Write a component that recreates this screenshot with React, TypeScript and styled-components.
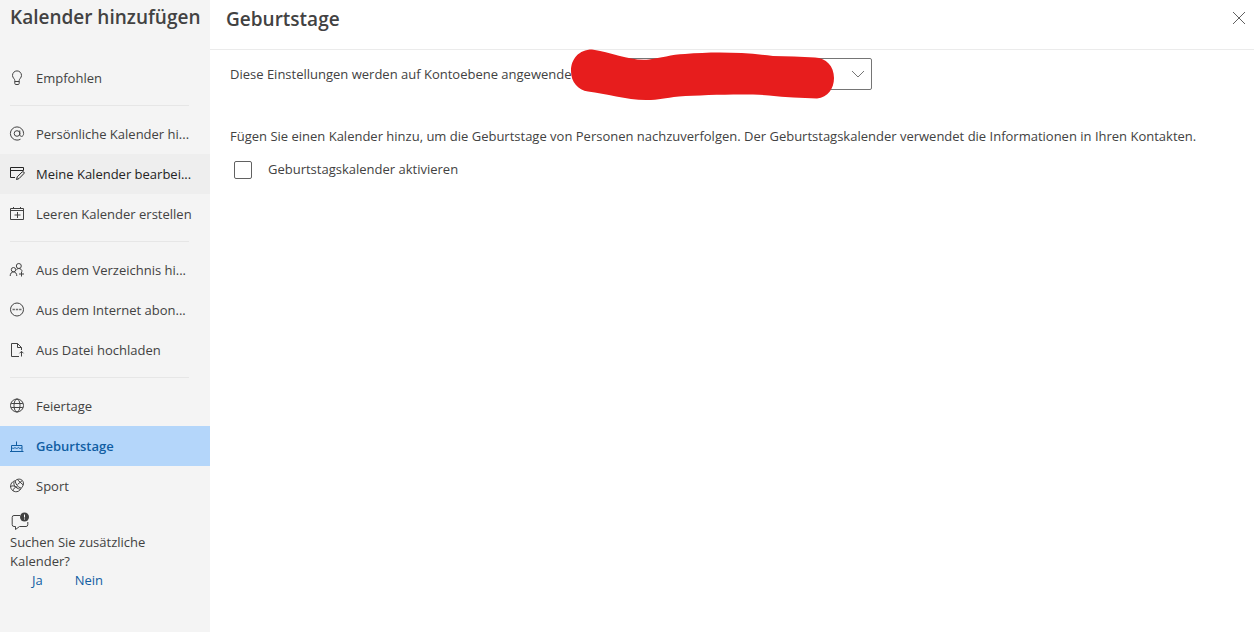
import React from "react";
import styled, { createGlobalStyle } from "styled-components";

const GlobalStyle = createGlobalStyle`
  * { box-sizing: border-box; }
  body {
    margin: 0;
    background: #ffffff;
    color: #424242;
    font-family: "Segoe UI", "Open Sans", "Noto Sans", sans-serif;
    font-size: 13px;
    line-height: 19px;
  }
  button, select, input { font: inherit; color: inherit; }
`;

const Layout = styled.div`
  display: flex;
  min-height: 100vh;
`;

const Sidebar = styled.aside`
  flex: none;
  width: 210px;
  background: #f4f4f4;
`;

const SidebarTitle = styled.h1`
  margin: 0;
  height: 58px;
  padding: 4px 0 0 10px;
  font-size: 19px;
  line-height: 26px;
  font-weight: 600;
  white-space: nowrap;
`;

const Separator = styled.hr`
  margin: 7px 21px 8px 10px;
  border: 0;
  height: 1px;
  background: #e6e6e6;
`;

const NavButton = styled.button<{ $state?: "hover" | "selected" }>`
  display: flex;
  align-items: center;
  gap: 11px;
  width: 100%;
  height: 40px;
  padding: 0 9px;
  border: 0;
  text-align: left;
  background: ${(p) =>
    p.$state === "selected" ? "#b4d6fa" : p.$state === "hover" ? "#eeeeee" : "transparent"};
  color: ${(p) =>
    p.$state === "selected" ? "#115ea3" : p.$state === "hover" ? "#242424" : "#424242"};
  font-weight: ${(p) => (p.$state === "selected" ? 600 : 400)};
`;

const NavLabel = styled.span`
  flex: 1;
  min-width: 0;
  white-space: nowrap;
`;

const Icon = styled.svg`
  flex: none;
  display: block;
  fill: none;
  stroke: currentColor;
  stroke-width: 1;
  stroke-linejoin: round;
`;

const Feedback = styled.section`
  padding: 6px 10px 0;
`;

const FeedbackText = styled.p`
  margin: 1px 0 0;
`;

const Answers = styled.div`
  display: flex;
  gap: 32px;
  padding-left: 22px;
`;

const AnswerButton = styled.button`
  padding: 0;
  border: 0;
  background: none;
  color: #115ea3;
`;

const Main = styled.main`
  flex: 1;
  min-width: 0;
`;

const PanelHeader = styled.header`
  display: flex;
  align-items: flex-start;
  justify-content: space-between;
  height: 50px;
  padding: 6px 8px 0 16px;
  border-bottom: 1px solid #ebebeb;
`;

const PanelTitle = styled.h2`
  margin: 0;
  font-size: 19px;
  line-height: 26px;
  font-weight: 600;
`;

const CloseButton = styled.button`
  padding: 5px 0;
  border: 0;
  background: none;
  color: #616161;
`;

const PanelBody = styled.div`
  padding: 8px 20px;
`;

const AccountRow = styled.div`
  position: relative;
  display: flex;
  align-items: center;
  width: 642px;
  max-width: 100%;
  height: 32px;
`;

const AccountLabel = styled.label`
  flex: 0 0 370px;
  white-space: nowrap;
`;

const SelectWrap = styled.div`
  position: relative;
  flex: 1;
`;

const AccountSelect = styled.select`
  display: block;
  appearance: none;
  width: 100%;
  height: 32px;
  border: 1px solid #757575;
  border-radius: 2px;
  background: #ffffff;
`;

const Chevron = styled(Icon)`
  position: absolute;
  top: 11px;
  right: 7px;
  pointer-events: none;
  color: #757575;
`;

const Redaction = styled.svg`
  position: absolute;
  left: 340px;
  top: -10px;
`;

const Description = styled.p`
  margin: 37px 0 0;
`;

const CheckRow = styled.label`
  display: flex;
  align-items: center;
  gap: 16px;
  margin-top: 14px;
  padding-left: 4px;
`;

const Checkbox = styled.input`
  appearance: none;
  width: 18px;
  height: 18px;
  margin: 0;
  border: 1px solid #616161;
  border-radius: 2px;
  background: #ffffff;
  &:checked { background: #0f6cbd; }
`;

const icons = {
  bulb: (
    <>
      <path d="M5.800 10.500c0-1.700-2.300-2.600-2.300-5.100a4.500 4.500 0 0 1 9 0c0 2.500-2.300 3.400-2.300 5.100v3c0 .6-.4 1-1 1H6.800c-.6 0-1-.4-1-1z" />
      <path d="M5.800 11.500h4.400" />
    </>
  ),
  at: (
    <>
      <circle cx="8" cy="7.500" r="2.800" />
      <path d="M10.800 4.500v4c0 1.200.7 1.900 1.700 1.900 1.300 0 2.100-1.300 2.100-2.900A6.600 6.600 0 1 0 8 14.100c1.400 0 2.500-.3 3.500-.9" />
    </>
  ),
  edit: (
    <>
      <path d="M6 11.500H1.500v-10h13v3M1.500 4.500h13" />
      <path d="M7.500 13.500l.8-2.700 4.800-4.800a1.200 1.200 0 0 1 1.700 1.700l-4.800 4.900z" />
    </>
  ),
  calendarAdd: (
    <>
      <path d="M1.500 2.500h13v11h-13zM1.500 4.500h13M4.500 1v1.500M11.500 1v1.500" />
      <path d="M8.500 6v6M5.500 9h6" />
    </>
  ),
  people: (
    <>
      <circle cx="9.800" cy="4" r="2.500" />
      <circle cx="4.500" cy="7.700" r="2.200" />
      <path d="M1.200 14c0-2.500 1.300-4.100 3.300-4.100S7.800 11.500 7.800 14M7.200 8.200c.6-1.100 1.500-1.700 2.600-1.700 1.700 0 3 1.200 3.400 2.900" />
      <path d="M12.500 9.500v5M10 12h5" />
    </>
  ),
  web: (
    <>
      <circle cx="8" cy="7.500" r="6.500" />
      <path d="M3.500 7.500h2.400M6.800 7.500h2.400M10.100 7.500h2.400" strokeWidth="1.600" strokeOpacity=".75" />
    </>
  ),
  file: (
    <>
      <path d="M10 14.500H2.500v-13h6l4 4v2.500M8.500 1.500v4h4" />
      <path d="M12.500 14.500v-5M10.500 11.300l2-2 2 2" />
    </>
  ),
  globe: (
    <>
      <circle cx="8" cy="7.500" r="6.500" />
      <ellipse cx="8" cy="7.500" rx="3" ry="6.500" />
      <path d="M2.200 5.500h11.600M2.200 9.500h11.600" />
    </>
  ),
  cake: (
    <>
      <path d="M1 13.500h13.500M2.500 13.500v-6h10.500v6M7.500 7.500v-4" />
      <path d="M2.500 9.500c1 1.200 2.500 1.200 3.500 0 1 1.200 2.300 1.200 3.300 0 1 1.200 2.700 1.200 3.700 0" />
    </>
  ),
  sport: (
    <>
      <path d="M12.200 10.200A5.500 5.500 0 1 1 6.200 2.800" />
      <path d="M6.200 2.800C8.500.6 11.500.6 13.300 2.500c1.700 1.800 1.600 5-1.100 7.700M6.200 2.800c.2 3 2.500 6.500 6 7.400M8.500 6.500l4.800-4M8.500 1.800l5.500 5" />
      <path d="M1.200 8.500c2.500-1.200 5-.7 7 1.300M5 4c-.5 3 .5 5.500 6.500 7.500M4 12.800c.3-2 1.600-3.600 4.200-4" />
    </>
  ),
};

type IconName = keyof typeof icons;

interface NavEntry {
  icon: IconName;
  label: string;
  title?: string;
  state?: "hover" | "selected";
}

const groups: NavEntry[][] = [
  [{ icon: "bulb", label: "Empfohlen" }],
  [
    { icon: "at", label: "Persönliche Kalender hi...", title: "Persönliche Kalender hinzufügen" },
    {
      icon: "edit",
      label: "Meine Kalender bearbei...",
      title: "Meine Kalender bearbeiten",
      state: "hover",
    },
    { icon: "calendarAdd", label: "Leeren Kalender erstellen" },
  ],
  [
    { icon: "people", label: "Aus dem Verzeichnis hi...", title: "Aus dem Verzeichnis hinzufügen" },
    { icon: "web", label: "Aus dem Internet abon...", title: "Aus dem Internet abonnieren" },
    { icon: "file", label: "Aus Datei hochladen" },
  ],
  [
    { icon: "globe", label: "Feiertage" },
    { icon: "cake", label: "Geburtstage", state: "selected" },
    { icon: "sport", label: "Sport" },
  ],
];

export default function App() {
  return (
    <>
      <GlobalStyle />
      <Layout>
        <Sidebar>
          <SidebarTitle>Kalender hinzufügen</SidebarTitle>
          <nav>
            {groups.map((group, index) => (
              <React.Fragment key={index}>
                {index > 0 && <Separator />}
                {group.map((entry) => (
                  <NavButton
                    key={entry.label}
                    type="button"
                    title={entry.title}
                    $state={entry.state}
                  >
                    <Icon width="16" height="16" viewBox="0 0 16 16" aria-hidden="true">
                      {icons[entry.icon]}
                    </Icon>
                    <NavLabel>{entry.label}</NavLabel>
                  </NavButton>
                ))}
              </React.Fragment>
            ))}
          </nav>
          <Feedback>
            <Icon width="20" height="20" viewBox="0 0 20 20" aria-hidden="true">
              <path d="M10 3.500H4A1.800 1.800 0 0 0 2.200 5.300v7.400A1.800 1.800 0 0 0 4 14.500h1.500v3l4-3H16a1.800 1.800 0 0 0 1.800-1.800V10" />
              <circle cx="14.500" cy="5" r="4.500" fill="currentColor" stroke="none" />
              <path d="M14.500 2.500v3M14.500 6.500v1" stroke="#ffffff" />
            </Icon>
            <FeedbackText>Suchen Sie zusätzliche Kalender?</FeedbackText>
            <Answers>
              <AnswerButton type="button">Ja</AnswerButton>
              <AnswerButton type="button">Nein</AnswerButton>
            </Answers>
          </Feedback>
        </Sidebar>
        <Main>
          <PanelHeader>
            <PanelTitle>Geburtstage</PanelTitle>
            <CloseButton type="button" aria-label="Schließen">
              <Icon width="14" height="14" viewBox="0 0 14 14" aria-hidden="true">
                <path d="M1 1l12 12M13 1L1 13" />
              </Icon>
            </CloseButton>
          </PanelHeader>
          <PanelBody>
            <AccountRow>
              <AccountLabel htmlFor="account">
                Diese Einstellungen werden auf Kontoebene angewendet
              </AccountLabel>
              <SelectWrap>
                <AccountSelect id="account" />
                <Chevron width="14" height="10" viewBox="0 0 14 10" aria-hidden="true">
                  <path d="M1 2l6 6 6-6" />
                </Chevron>
              </SelectWrap>
              <Redaction width="266" height="54" viewBox="0 0 266 54" aria-hidden="true">
                <path
                  fill="#e71d1d"
                  d="M22 1.500C9 1.500 1 11 1 23c0 11 7 19 17 20.500 18 2 38 8.500 58 8.500 14 0 18-2 33-3.500 25-1.500 70-3 90-1 17 2 32 2.500 48 3 11-1 17-10 17-20.500 0-12-8-20-19-20.500-14-1-28-1-42-1.500-30-4-60-4.500-88-2-14 .5-24 4-36 5.500-18 2-36-7-57-10z"
                />
              </Redaction>
            </AccountRow>
            <Description>
              Fügen Sie einen Kalender hinzu, um die Geburtstage von Personen nachzuverfolgen. Der
              Geburtstagskalender verwendet die Informationen in Ihren Kontakten.
            </Description>
            <CheckRow>
              <Checkbox type="checkbox" />
              Geburtstagskalender aktivieren
            </CheckRow>
          </PanelBody>
        </Main>
      </Layout>
    </>
  );
}
